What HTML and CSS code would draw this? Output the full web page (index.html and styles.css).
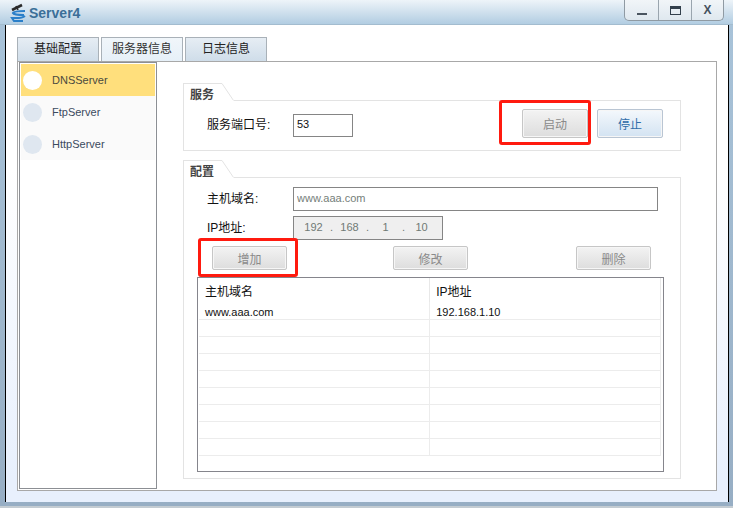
FILE: index.html
```html
<!DOCTYPE html>
<html lang="en">
<head>
    <meta charset="UTF-8">
    <meta name="viewport" content="width=device-width, initial-scale=1.0">
    <title>Server4</title>
    <link rel="stylesheet" href="styles.css">
</head>
<body>

<div class="window">
    <div class="titlebar">
        <svg class="app-icon" width="17" height="19" viewBox="0 0 17 19">
            <path d="M2 7 L12 2" stroke="#2b2b2b" stroke-width="2.6" fill="none"/>
            <path d="M6 3 L8 7" stroke="#2b2b2b" stroke-width="1.5" fill="none"/>
            <path d="M15 8 C9 8 4 8 3 10 C4 12 9 12 14 12" stroke="#2a7fc9" stroke-width="2.2" fill="none"/>
            <path d="M15 13 C11 16 6 15 2 15 L4 18 L13 18" stroke="#2a7fc9" stroke-width="2" fill="none"/>
        </svg>
        <span class="title">Server4</span>
        <div class="win-controls">
            <div class="win-btn"><span class="icon-min"></span></div>
            <div class="win-btn"><span class="icon-max"></span></div>
            <div class="win-btn win-close">X</div>
        </div>
    </div>

    <div class="client">
        <div class="tabs">
            <div class="tab">基础配置</div>
            <div class="tab active">服务器信息</div>
            <div class="tab">日志信息</div>
        </div>

        <div class="panel">
            <div class="sidebar">
                <div class="side-item selected"><span class="dot"></span>DNSServer</div>
                <div class="side-item"><span class="dot"></span>FtpServer</div>
                <div class="side-item"><span class="dot"></span>HttpServer</div>
            </div>

            <div class="main">
                <div class="section">
                    <div class="section-head">
                        <div class="section-title">服务</div>
                        <svg class="section-slant" width="12" height="18" viewBox="0 0 12 18">
                            <path d="M0 .5 L11.5 17.5" stroke="#e3e3e3" fill="none"/>
                        </svg>
                        <div class="section-line"></div>
                    </div>
                    <div class="section-body port-body">
                        <label class="field-label port-label">服务端口号:</label>
                        <input class="text-input port-input" type="text" value="53">
                        <div class="port-buttons">
                            <button class="btn port-btn">启动</button>
                            <button class="btn port-btn btn-on">停止</button>
                        </div>
                    </div>
                </div>

                <div class="section section-config">
                    <div class="section-head">
                        <div class="section-title">配置</div>
                        <svg class="section-slant" width="12" height="18" viewBox="0 0 12 18">
                            <path d="M0 .5 L11.5 17.5" stroke="#e3e3e3" fill="none"/>
                        </svg>
                        <div class="section-line"></div>
                    </div>
                    <div class="section-body config-body">
                        <div class="form-row">
                            <label class="field-label">主机域名:</label>
                            <input class="text-input host-input" type="text" value="www.aaa.com">
                        </div>
                        <div class="form-row">
                            <label class="field-label">IP地址:</label>
                            <div class="ip-field">
                                <span class="ip-num">192</span><span class="ip-dot">.</span>
                                <span class="ip-num">168</span><span class="ip-dot">.</span>
                                <span class="ip-num">1</span><span class="ip-dot">.</span>
                                <span class="ip-num">10</span>
                            </div>
                        </div>
                        <div class="action-row">
                            <button class="btn action-btn">增加</button>
                            <button class="btn action-btn action-edit">修改</button>
                            <button class="btn action-btn action-del">删除</button>
                        </div>
                        <div class="table-box">
                            <table class="host-table">
                                <tr><th>主机域名</th><th>IP地址</th></tr>
                                <tr><td>www.aaa.com</td><td>192.168.1.10</td></tr>
                                <tr><td></td><td></td></tr>
                                <tr><td></td><td></td></tr>
                                <tr><td></td><td></td></tr>
                                <tr><td></td><td></td></tr>
                                <tr><td></td><td></td></tr>
                                <tr><td></td><td></td></tr>
                                <tr><td></td><td></td></tr>
                                <tr><td></td><td></td></tr>
                            </table>
                        </div>
                    </div>
                </div>
            </div>
        </div>

        <!-- red marks drawn over the screenshot -->
        <div class="mark mark-start"></div>
        <div class="mark mark-add"></div>
    </div>
</div>

</body>
</html>
```

FILE: styles.css
```css
html, body {
    margin: 0;
    padding: 0;
}
body {
    width: 733px;
    height: 508px;
    overflow: hidden;
    font-family: "Liberation Sans", "Noto Sans CJK SC", sans-serif;
    font-size: 12px;
    color: #1a1a1a;
}
.window {
    width: 733px;
    height: 508px;
    box-sizing: border-box;
    display: flex;
    flex-direction: column;
    background: linear-gradient(#a9c4da, #97aec4);
    border-bottom: 2px solid #c4ccd2;
}
.titlebar {
    height: 25px;
    flex: none;
    display: flex;
    align-items: flex-start;
    box-sizing: border-box;
    padding-left: 10px;
    background: linear-gradient(#eef4f9, #b2cde2);
    border-bottom: 1px solid #a3bccf;
    position: relative;
}
.app-icon {
    margin-top: 3px;
}
.title {
    margin: 5px 0 0 2px;
    font-size: 14px;
    font-weight: bold;
    color: #3b6f98;
}
.win-controls {
    margin-left: auto;
    margin-right: 9px;
    display: flex;
    height: 21px;
    box-sizing: border-box;
    border: 1px solid #8f9aa3;
    border-top: none;
    border-radius: 0 0 5px 5px;
    background: linear-gradient(#f1f5f8, #dfe8ef);
}
.win-btn {
    width: 33px;
    box-sizing: border-box;
    display: flex;
    align-items: center;
    justify-content: center;
    border-left: 1px solid #9aa5ae;
}
.win-btn:first-child {
    border-left: none;
}
.win-close {
    width: 32px;
}
.icon-min {
    width: 10px;
    height: 2px;
    margin-top: 7px;
    background: #4a5560;
}
.icon-max {
    width: 9px;
    height: 5px;
    border: 1px solid #33404c;
    border-top-width: 3px;
    margin-top: 1px;
}
.win-close {
    font-weight: bold;
    font-size: 12px;
    color: #46525e;
}
.client {
    flex: 1;
    position: relative;
    margin: 0 4px 4px 5px;
    padding: 12px 11px 0;
    border-left: 1px solid #000;
    border-right: 1px solid #000;
    background: linear-gradient(#fff 30%, #e8f0fd 95%);
}
.tabs {
    display: flex;
    gap: 2px;
    height: 24px;
}
.tab {
    width: 82px;
    box-sizing: border-box;
    border: 1px solid #a9b1b8;
    border-bottom: none;
    background: linear-gradient(#e6edf4, #cfdde9);
    text-align: center;
    line-height: 23px;
    font-size: 12px;
    color: #222;
}
.tab.active {
    background: linear-gradient(#f1f6fa, #e6f0f8);
    color: #333;
}
.panel {
    width: 700px;
    height: 430px;
    box-sizing: border-box;
    display: flex;
    align-items: flex-start;
    border: 1px solid #a8a8a8;
    background: #fff;
    padding-left: 1px;
}
.sidebar {
    width: 138px;
    height: 427px;
    flex: none;
    box-sizing: border-box;
    border: 1px solid #8c8f94;
    padding: 1px;
}
.side-item {
    height: 32px;
    display: flex;
    align-items: center;
    gap: 10px;
    padding-left: 2px;
    background: #fafafa;
    font-size: 11px;
    color: #3b4a5e;
}
.side-item.selected {
    background: #ffdf7c;
    color: #4a4a40;
}
.dot {
    width: 19px;
    height: 19px;
    border-radius: 50%;
    background: #dfe7f0;
}
.selected .dot {
    background: #fff;
}
.main {
    margin: 21px 0 0 26px;
    width: 498px;
}
.section-config {
    margin-top: 9px;
}
.section-head {
    display: flex;
    height: 18px;
}
.section-title {
    width: 39px;
    height: 18px;
    box-sizing: border-box;
    border: 1px solid #e3e3e3;
    border-width: 1px 0 0 1px;
    padding-left: 6px;
    line-height: 22px;
    font-size: 12px;
    font-weight: bold;
    color: #444;
}
.section-line {
    flex: 1;
    border-bottom: 1px solid #e3e3e3;
}
.section-body {
    box-sizing: border-box;
    border: 1px solid #e3e3e3;
    border-top: none;
}
.port-body {
    height: 50px;
    display: flex;
    align-items: flex-start;
    padding: 8px 17px 0 23px;
}
.field-label {
    width: 86px;
    flex: none;
    margin-top: -4px;
    font-size: 12px;
    color: #111;
}
.port-label {
    margin-top: 0;
    line-height: 33px;
}
.text-input {
    box-sizing: border-box;
    border: 1px solid #858585;
    padding: 0 3px 3px;
    margin: 0;
    height: 23px;
    font-family: inherit;
    font-size: 11px;
    background: #fff;
    color: #111;
}
.port-input {
    width: 60px;
    margin-top: 5px;
}
.port-buttons {
    margin-left: auto;
    display: flex;
    gap: 9px;
}
.btn {
    box-sizing: border-box;
    padding: 0;
    border: 1px solid #c6c6c6;
    border-radius: 2px;
    background: linear-gradient(#f3f3f3, #dddddd);
    box-shadow: inset 0 0 0 1px #f6f6f6;
    font-family: inherit;
    font-size: 12px;
    color: #8a8a8a;
}
.port-btn {
    width: 66px;
    height: 29px;
}
.btn-on {
    background: linear-gradient(#f4f8fc, #d3e3f2);
    border-color: #b9c5d3;
    color: #2f6ca8;
}
.config-body {
    height: 301px;
    padding: 9px 0 0 23px;
}
.form-row {
    display: flex;
    align-items: center;
    height: 24px;
    margin-bottom: 5px;
}
.host-input {
    width: 365px;
    height: 24px;
    color: #75807a;
}
.ip-field {
    width: 150px;
    height: 24px;
    box-sizing: border-box;
    border: 1px solid #858585;
    background: #efefef;
    display: flex;
    align-items: center;
    padding: 0 0 3px 6px;
    font-size: 11px;
    color: #6f7a75;
}
.ip-num {
    width: 27px;
    text-align: center;
}
.ip-dot {
    width: 9px;
    text-align: center;
}
.action-row {
    display: flex;
    margin: 6px 0 0 5px;
}
.action-btn {
    width: 75px;
    height: 24px;
}
.action-edit {
    margin-left: 106px;
}
.action-del {
    margin-left: 108px;
}
.table-box {
    width: 467px;
    height: 195px;
    box-sizing: border-box;
    margin: 7px 0 0 -10px;
    border: 1px solid #85858c;
    padding-left: 1px;
}
.host-table {
    border-collapse: collapse;
    table-layout: fixed;
    width: 462px;
}
.host-table th {
    height: 24px;
    padding: 0 0 0 6px;
    box-sizing: border-box;
    border-right: 1px solid #e8e8e8;
    text-align: left;
    font-size: 12px;
    font-weight: normal;
    color: #111;
}
.host-table td {
    height: 17px;
    padding: 4px 0 0 6px;
    box-sizing: border-box;
    border-bottom: 1px solid #ececec;
    border-right: 1px solid #ececec;
    font-size: 11px;
    line-height: 12px;
    color: #111;
}
.mark {
    position: absolute;
    box-sizing: border-box;
    border: 3px solid #ff1a0f;
    border-radius: 3px;
}
.mark-start {
    left: 493px;
    top: 75px;
    width: 92px;
    height: 45px;
}
.mark-add {
    left: 192px;
    top: 213px;
    width: 100px;
    height: 39px;
}
```
